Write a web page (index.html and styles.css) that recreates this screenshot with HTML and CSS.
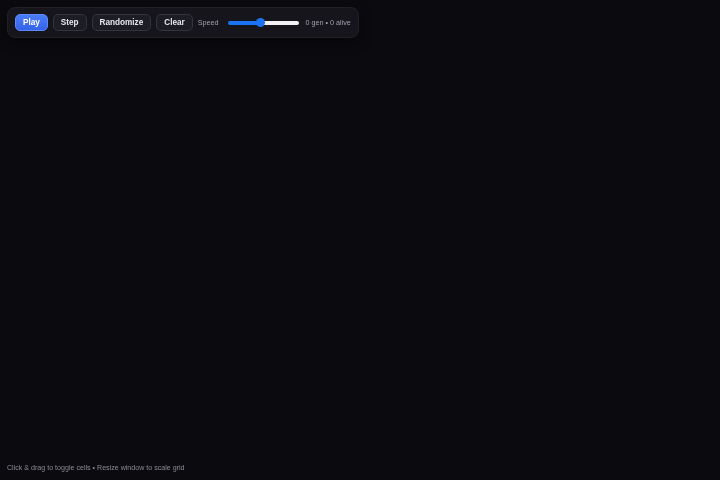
FILE: index.html
```
<!DOCTYPE html>
<html lang="en">
<head>
  <meta charset="UTF-8">
  <meta name="viewport" content="width=device-width, initial-scale=1.0">
  <title>Game of Life</title>
  <link rel="stylesheet" href="styles.css">
</head>
<body>
  <div class="board"></div>

  <div class="toolbar">
    <button class="btn btn-primary">Play</button>
    <button class="btn">Step</button>
    <button class="btn">Randomize</button>
    <button class="btn">Clear</button>
    <label class="speed-label" for="speed">Speed</label>
    <input id="speed" class="speed" type="range" min="0" max="100" value="46">
    <span class="stats">0 gen • 0 alive</span>
  </div>

  <div class="hint">Click &amp; drag to toggle cells • Resize window to scale grid</div>
</body>
</html>
```

FILE: styles.css
```
body {
  background-color: #0b0b0f;
  color: #e6e6ee;
  font-family: "Liberation Sans", Arial, sans-serif;
  margin: 0;
  overflow: hidden;
}

.board {
  width: 100vw;
  height: 100vh;
  background-color: #0b0b0f;
}

.toolbar {
  position: fixed;
  top: 7px;
  left: 7px;
  display: flex;
  align-items: center;
  gap: 5px;
  padding: 6px 7px;
  background-color: #15151b;
  border: 1px solid #202028;
  border-radius: 8px;
  box-shadow: 0 4px 14px rgba(0, 0, 0, 0.45);
}

.btn {
  font-family: inherit;
  font-size: 8.2px;
  font-weight: bold;
  color: #e8e8f0;
  background-color: #1d1d24;
  border: 1px solid #34343e;
  border-radius: 5px;
  height: 17px;
  padding: 0 7px;
  cursor: pointer;
}

.btn-primary {
  background: linear-gradient(#4a7cf6, #3563e9);
  border-color: #5b8afa;
  color: #fff;
}

.speed-label {
  font-size: 7.2px;
  color: #a0a0ad;
}

.speed {
  -webkit-appearance: none;
  appearance: none;
  width: 71px;
  height: 4px;
  margin: 0 2px 0 4px;
  border-radius: 2px;
  background: linear-gradient(to right, #1a73f0 46%, #f2f2f5 46%);
}

.speed::-webkit-slider-thumb {
  -webkit-appearance: none;
  width: 9px;
  height: 9px;
  border-radius: 50%;
  background-color: #1a73f0;
  border: none;
}

.stats {
  font-size: 7.2px;
  color: #a0a0ad;
}

.hint {
  position: fixed;
  left: 7px;
  bottom: 8px;
  font-size: 7.1px;
  color: #8a8a96;
}
```
